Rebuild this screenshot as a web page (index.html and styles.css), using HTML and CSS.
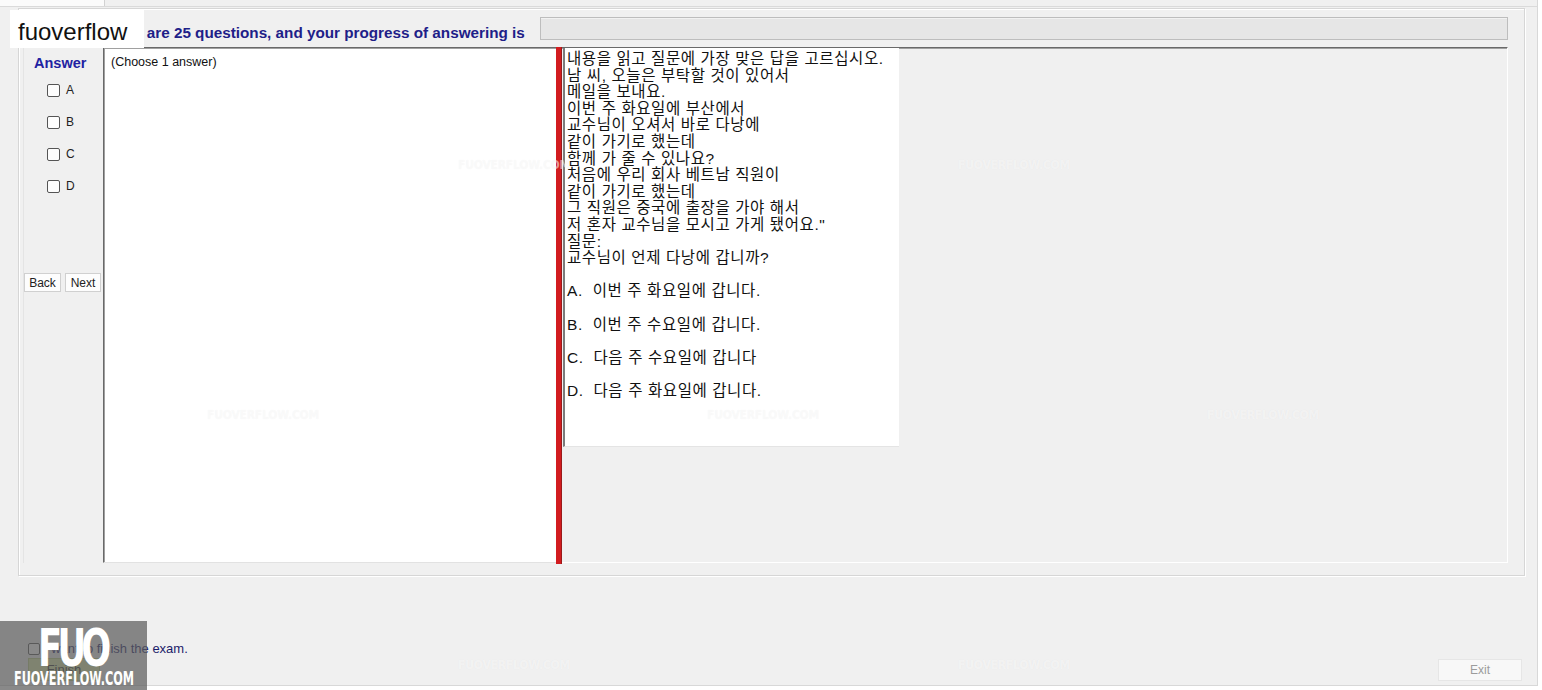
FILE: index.html
```html
<!DOCTYPE html>
<html lang="en">
<head>
<meta charset="utf-8">
<title>Exam</title>
<link rel="stylesheet" href="styles.css">
</head>
<body>
<div class="window">
  <div class="tabstrip"><div class="tab"></div></div>
  <div class="group">
    <div class="header">
      <div class="progress-text">There are 25 questions, and your progress of answering is</div>
      <div class="progress"></div>
    </div>
    <div class="main">
      <div class="answers">
        <div class="answer-title">Answer</div>
        <div class="opt"><span class="cb"></span>A</div>
        <div class="opt"><span class="cb"></span>B</div>
        <div class="opt"><span class="cb"></span>C</div>
        <div class="opt"><span class="cb"></span>D</div>
        <div class="nav"><button class="btn back">Back</button><button class="btn next">Next</button></div>
      </div>
      <div class="question">(Choose 1 answer)</div>
      <div class="splitter"></div>
      <div class="right">
        <div class="content">내용을 읽고 질문에 가장 맞은 답을 고르십시오.
남 씨, 오늘은 부탁할 것이 있어서
메일을 보내요.
이번 주 화요일에 부산에서
교수님이 오셔서 바로 다낭에
같이 가기로 했는데
함께 가 줄 수 있나요?
처음에 우리 회사 베트남 직원이
같이 가기로 했는데
그 직원은 중국에 출장을 가야 해서
저 혼자 교수님을 모시고 가게 됐어요."
질문:
교수님이 언제 다낭에 갑니까?

A.  이번 주 화요일에 갑니다.

B.  이번 주 수요일에 갑니다.

C.  다음 주 수요일에 갑니다

D.  다음 주 화요일에 갑니다.</div>
      </div>
    </div>
  </div>
  <div class="footer">
    <div class="finish">
      <div class="finish-check"><span class="cb small"></span>I want to finish the exam.</div>
      <button class="finish-btn">Finish</button>
    </div>
    <button class="exit">Exit</button>
  </div>
</div>

<div class="wm wm-text" style="left:458px;top:158px">FUOVERFLOW.COM</div>
<div class="wm wm-text" style="left:958px;top:158px">FUOVERFLOW.COM</div>
<div class="wm wm-text" style="left:207px;top:408px">FUOVERFLOW.COM</div>
<div class="wm wm-text" style="left:707px;top:408px">FUOVERFLOW.COM</div>
<div class="wm wm-text" style="left:1207px;top:408px">FUOVERFLOW.COM</div>
<div class="wm wm-text" style="left:458px;top:658px">FUOVERFLOW.COM</div>
<div class="wm wm-text" style="left:958px;top:658px">FUOVERFLOW.COM</div>

<div class="brand">fuoverflow</div>
<div class="fuo-badge">
  <div class="fuo-big">FUO</div>
  <div class="fuo-small">FUOVERFLOW.COM</div>
</div>
</body>
</html>
```
FILE: styles.css
```css
* { box-sizing: border-box; }

body {
  margin: 0;
  position: relative;
  background: #ffffff;
  font-family: "Liberation Sans", Arial, sans-serif;
  width: 1542px;
  height: 690px;
  overflow: hidden;
}

.window {
  width: 1538px;
  height: 686px;
  background: #f0f0f0;
  border-right: 1px solid #d8d8d8;
  border-bottom: 1px solid #d8d8d8;
  display: flex;
  flex-direction: column;
  overflow: hidden;
}

.tabstrip {
  height: 7px;
  flex-shrink: 0;
  border-bottom: 1px solid #dadada;
  display: flex;
}

.tab {
  width: 105px;
  background: #fbfbfb;
  border-right: 1px solid #d2d2d2;
}

.group {
  margin: 1px 12px 0 18px;
  border: 1px solid #d6d6d6;
  box-shadow: inset 1px 1px 0 #ffffff, 1px 1px 0 #ffffff;
  padding: 8px 16px 12px 4px;
  flex-shrink: 0;
}

.header {
  display: flex;
  align-items: center;
  height: 23px;
}

.progress-text {
  align-self: flex-end;
  margin-left: 78px;
  margin-bottom: -1px;
  font-size: 15.25px;
  line-height: 17px;
  font-weight: bold;
  color: #1e2088;
  white-space: nowrap;
}

.progress {
  margin-left: auto;
  width: 968px;
  height: 23px;
  border: 1px solid #bdbdbd;
  background: #e6e6e6;
  box-shadow: inset 0 1px 0 #f2f2f2;
}

.main {
  display: flex;
  height: 516px;
  margin-top: 7px;
}

.answers {
  width: 80px;
  border-left: 1px solid #e4e4e4;
  padding-top: 8px;
  display: flex;
  flex-direction: column;
}

.answer-title {
  padding-left: 10px;
  font-size: 14.5px;
  line-height: 16px;
  font-weight: bold;
  color: #2222a2;
  margin-bottom: 3px;
}

.opt {
  height: 32px;
  display: flex;
  align-items: center;
  padding-left: 23px;
  gap: 6px;
  font-size: 12px;
  color: #222;
}

.cb {
  display: inline-block;
  width: 13px;
  height: 13px;
  border: 1px solid #555;
  border-radius: 2px;
  background: #fdfdfd;
}

.cb.small {
  width: 12px;
  height: 12px;
}

.nav {
  margin-top: 71px;
  display: flex;
  gap: 4px;
}

.btn {
  height: 19px;
  padding: 0;
  border: 1px solid #d0d0d0;
  background: #fdfdfd;
  font-family: "Liberation Sans", Arial, sans-serif;
  font-size: 12px;
  color: #222;
}

.back { width: 37px; }
.next { width: 36px; }

.question {
  width: 453px;
  background: #ffffff;
  border-left: 1px solid #696969;
  border-top: 1px solid #696969;
  border-bottom: 1px solid #e2e2e2;
  box-shadow: inset 1px 1px 0 #a0a0a0;
  padding: 7px 7px;
  font-size: 12.5px;
  color: #111;
}

.splitter {
  width: 6px;
  background: #d21c1f;
  border-right: 1px solid #9a1a1a;
  margin-bottom: -1px;
}

.right {
  flex: 1;
  border-top: 1px solid #696969;
  border-right: 1px solid #ffffff;
  border-bottom: 1px solid #ffffff;
  box-shadow: inset 0 1px 0 #a0a0a0;
}

.content {
  margin-left: 1px;
  width: 336px;
  height: 399px;
  background: #ffffff;
  border-left: 2px solid #7c7c7c;
  border-bottom: 1px solid #e4e4e4;
  padding: 3px 0 0 2px;
  white-space: pre;
  font-family: "Liberation Sans", "Noto Sans CJK KR", sans-serif;
  font-size: 15.5px;
  line-height: 16.6px;
  letter-spacing: 0.6px;
  color: #111;
}

.footer {
  flex: 1;
  display: flex;
  align-items: flex-start;
}

.finish {
  margin-left: 28px;
  margin-top: 66px;
  display: flex;
  flex-direction: column;
  align-items: flex-start;
}

.finish-check {
  display: flex;
  align-items: center;
  gap: 4px;
  height: 13px;
  font-size: 13px;
  color: #1c1c6a;
}

.finish-btn {
  margin-top: 3px;
  width: 72px;
  height: 23px;
  padding: 0;
  background: #d9eaa6;
  border: 1px solid #b9cc86;
  font-family: "Liberation Sans", Arial, sans-serif;
  font-size: 13px;
  color: #333;
}

.exit {
  margin-left: auto;
  margin-right: 15px;
  margin-top: 83px;
  width: 84px;
  height: 22px;
  padding: 0;
  background: #f8f8f8;
  border: 1px solid #e6e6e6;
  font-family: "Liberation Sans", Arial, sans-serif;
  font-size: 12px;
  color: #9c9c9c;
}

.wm {
  position: absolute;
  pointer-events: none;
}

.wm-text {
  font-family: "DejaVu Sans Condensed", "DejaVu Sans", sans-serif;
  font-weight: bold;
  font-size: 12px;
  letter-spacing: -0.2px;
  color: rgba(255, 255, 255, 0.55);
  text-shadow: 0 0 1px rgba(0, 0, 0, 0.05);
}

.brand {
  position: absolute;
  left: 10px;
  top: 10px;
  width: 134px;
  height: 38px;
  background: #ffffff;
  padding-left: 8px;
  padding-top: 2px;
  font-family: "Liberation Sans", Arial, sans-serif;
  font-size: 24px;
  line-height: 40px;
  color: #111;
}

.fuo-badge {
  position: absolute;
  left: 0;
  top: 621px;
  width: 147px;
  height: 69px;
  background: rgba(92, 92, 92, 0.72);
  color: #ffffff;
  overflow: hidden;
}

.fuo-big {
  position: absolute;
  left: 38px;
  top: 5px;
  font-family: "DejaVu Sans", sans-serif;
  font-weight: bold;
  font-size: 52px;
  line-height: 44px;
  letter-spacing: -7px;
  transform: scaleX(0.68);
  transform-origin: left top;
}

.fuo-small {
  position: absolute;
  left: 14px;
  top: 47px;
  font-family: "DejaVu Sans Condensed", "DejaVu Sans", sans-serif;
  font-weight: bold;
  font-size: 19px;
  line-height: 20px;
  white-space: nowrap;
  transform: scaleX(0.66);
  transform-origin: left top;
}
```
